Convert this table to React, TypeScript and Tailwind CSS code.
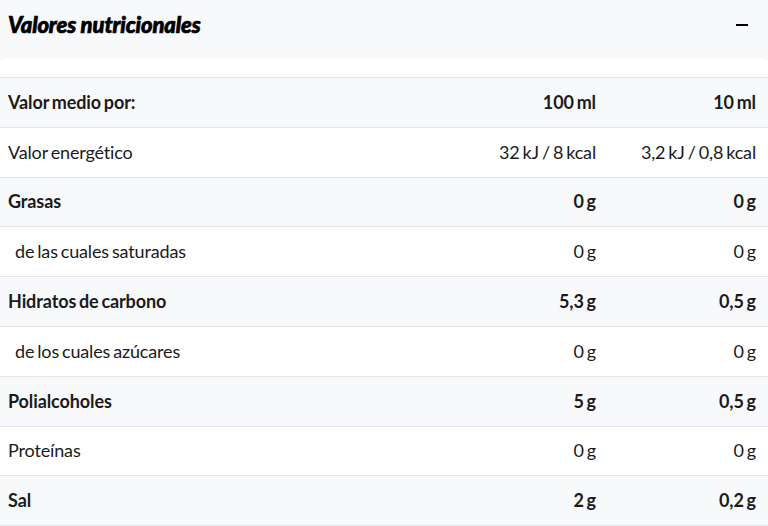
import React from 'react';

type Row = {
  label: string;
  per100: string;
  perPortion: string;
  bold?: boolean;
  sub?: boolean;
};

const rows: Row[] = [
  { label: 'Valor medio por:', per100: '100 ml', perPortion: '10 ml', bold: true },
  { label: 'Valor energético', per100: '32 kJ / 8 kcal', perPortion: '3,2 kJ / 0,8 kcal' },
  { label: 'Grasas', per100: '0 g', perPortion: '0 g', bold: true },
  { label: 'de las cuales saturadas', per100: '0 g', perPortion: '0 g', sub: true },
  { label: 'Hidratos de carbono', per100: '5,3 g', perPortion: '0,5 g', bold: true },
  { label: 'de los cuales azúcares', per100: '0 g', perPortion: '0 g', sub: true },
  { label: 'Polialcoholes', per100: '5 g', perPortion: '0,5 g', bold: true },
  { label: 'Proteínas', per100: '0 g', perPortion: '0 g' },
  { label: 'Sal', per100: '2 g', perPortion: '0,2 g', bold: true },
];

export default function App() {
  return (
    <div className="w-[768px] h-[526px] overflow-hidden bg-[#f8f9fb] font-['Lato','Liberation_Sans',sans-serif] text-[#1b1b1b]">
      <div className="h-[58px] flex items-center justify-between pl-2 pr-[20px]">
        <h2 className="text-[22px] font-black italic tracking-[-0.1px] text-black mt-[-10px] [-webkit-text-stroke:0.7px_black]">
          Valores nutricionales
        </h2>
        <span className="block w-[12px] h-[2px] bg-black mt-[-8px]"></span>
      </div>
      <div className="bg-white rounded-t-md pt-[19px]">
        <div className="border-t border-[#e4e5e8]">
          {rows.map((row, i) => (
            <div
              key={row.label}
              className={`grid grid-cols-[1fr_160px_160px] h-[49.8px] items-center border-b border-[#e4e5e8] text-[18px] [word-spacing:-1.5px] ${
                i % 2 === 0 ? 'bg-[#f8f9fb]' : 'bg-white'
              } ${row.bold ? 'font-bold tracking-[-0.1px]' : 'font-normal tracking-[-0.15px]'}`}
            >
              <div className={row.sub ? 'pl-[15px]' : 'pl-2'}>{row.label}</div>
              <div className="text-right pr-3">{row.per100}</div>
              <div className="text-right pr-3">{row.perPortion}</div>
            </div>
          ))}
        </div>
      </div>
    </div>
  );
}
